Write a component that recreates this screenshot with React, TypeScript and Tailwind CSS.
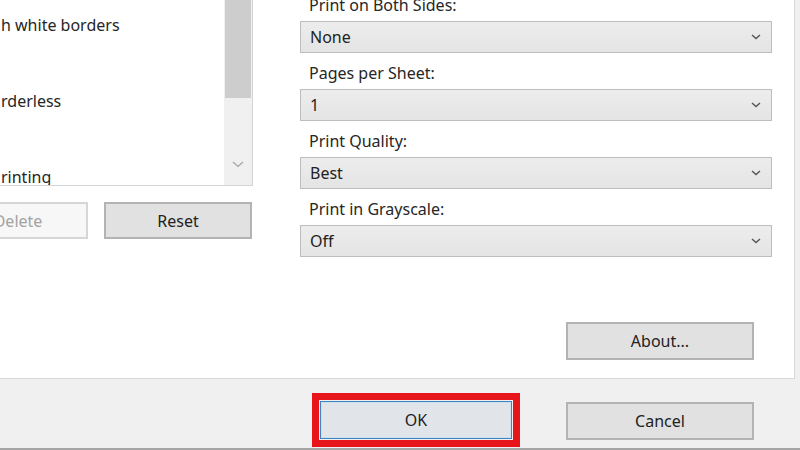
import React from "react";

const font = { fontFamily: '"Noto Sans", "Open Sans", sans-serif' };

function Chevron() {
  return (
    <svg width="10" height="6" viewBox="0 0 10 6" className="shrink-0">
      <path d="M1 1 L5 4.5 L9 1" fill="none" stroke="#555" strokeWidth="1.4" />
    </svg>
  );
}

function Select({ value }: { value: string }) {
  return (
    <div className="h-[32px] flex items-center justify-between pl-[9px] pr-[10px] border border-[#bdbdbd] bg-gradient-to-b from-[#ededed] to-[#e4e4e4] text-[16px] text-[#222]">
      <span>{value}</span>
      <Chevron />
    </div>
  );
}

function Group({ label, value }: { label: string; value: string }) {
  return (
    <div className="flex flex-col">
      <div className="h-[36px] pt-[10px] pl-[9px] leading-[20px] text-[16px] text-[#262626]">{label}</div>
      <Select value={value} />
    </div>
  );
}

function Btn({ children, className = "" }: { children: React.ReactNode; className?: string }) {
  return (
    <div className={"flex items-center justify-center border-2 border-[#b3b3b3] bg-[#e1e1e1] text-[16px] text-[#222] " + className}>
      {children}
    </div>
  );
}

export default function App() {
  return (
    <div style={font} className="w-[800px] h-[450px] overflow-hidden bg-[#f0f0f0] flex flex-col border-b-2 border-[#a5a5a5]">
      <div className="w-[795px] h-[379px] shrink-0 bg-white border-r border-b border-[#d9d9d9] flex overflow-hidden">
        {/* left column */}
        <div className="w-[313px] -ml-[60px] shrink-0 flex flex-col">
          <div className="h-[196px] -mt-[10px] border border-[#d4d4d4] flex">
            <div className="flex-1 flex flex-col pl-[60px] pt-[10px] text-[16px] text-[#262626] overflow-hidden">
              <div className="h-[76px] shrink-0 pt-[13px] leading-[22px]">h white borders</div>
              <div className="h-[76px] shrink-0 pt-[13px] leading-[22px]">rderless</div>
              <div className="h-[76px] shrink-0 pt-[13px] leading-[22px]">rinting</div>
            </div>
            <div className="w-[28px] flex flex-col bg-[#f0f0f0]">
              <div className="h-[107px] mx-[1px] bg-[#cdcdcd]" />
              <div className="flex-1" />
              <div className="h-[28px] flex items-start justify-center pt-[4px]">
                <svg width="12" height="7" viewBox="0 0 12 7">
                  <path d="M1 1 L6 5.5 L11 1" fill="none" stroke="#a6a6a6" strokeWidth="1.3" />
                </svg>
              </div>
            </div>
          </div>
          <div className="flex gap-[16px] mt-[16px]">
            <div className="w-[148px] h-[37px] flex items-center justify-center pl-[8px] border-2 border-[#d6d6d6] bg-[#f7f7f7] text-[16px] text-[#a3a3a3]">
              Delete
            </div>
            <Btn className="w-[148px] h-[37px]">Reset</Btn>
          </div>
        </div>
        {/* right column */}
        <div className="ml-[47px] w-[472px] shrink-0 -mt-[15px] flex flex-col">
          <Group label="Print on Both Sides:" value="None" />
          <Group label="Pages per Sheet:" value="1" />
          <Group label="Print Quality:" value="Best" />
          <Group label="Print in Grayscale:" value="Off" />
          <div className="flex justify-end pr-[18px] mt-[65px]">
            <Btn className="w-[188px] h-[38px]">About...</Btn>
          </div>
        </div>
      </div>
      <div className="flex-1 flex justify-end items-start gap-[46px] pr-[46px] pt-[14px]">
        <div className="border-[7px] border-[#e8141c] p-[1px]">
          <div className="w-[192px] h-[38px] flex items-center justify-center border border-[#3d84c4] bg-[#e1e5e9] text-[16px] text-[#222] shadow-[inset_0_0_0_1px_#cfe0ef]">
            OK
          </div>
        </div>
        <Btn className="w-[188px] h-[38px] mt-[9px]">Cancel</Btn>
      </div>
    </div>
  );
}
